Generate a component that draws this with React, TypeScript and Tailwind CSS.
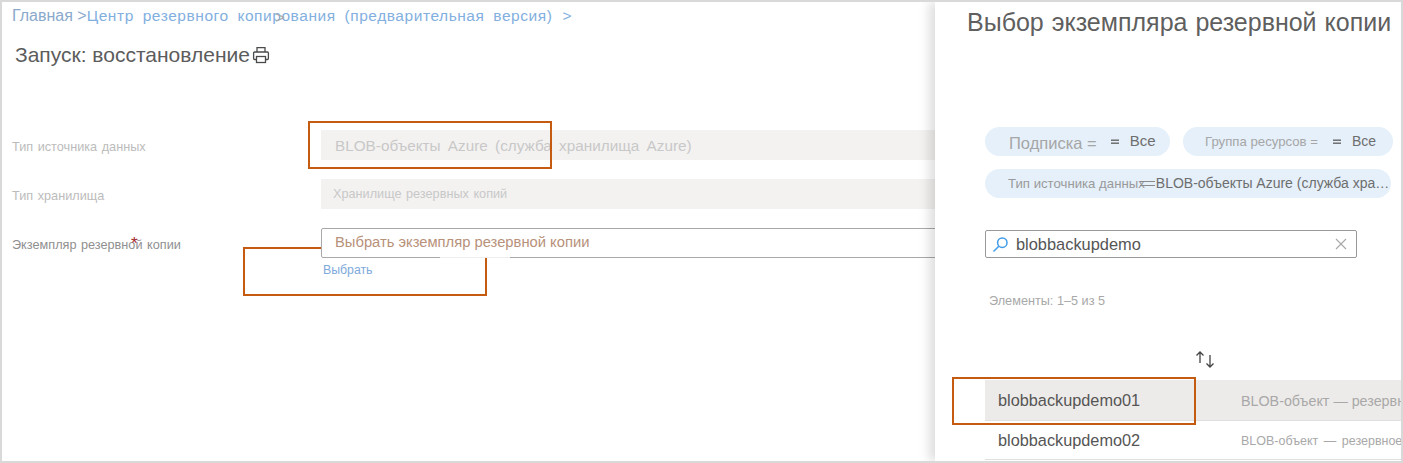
const font = { fontFamily: '"Liberation Sans", Arial, sans-serif' };

function PrintIcon() {
  return (
    <svg width="18" height="18" viewBox="0 0 18 18" fill="none" stroke="#4a4a4a" strokeWidth="1.3" className="ml-[2px] shrink-0">
      <path d="M5 6V1.6h8V6" />
      <path d="M4.5 13.5H2.6a1 1 0 0 1-1-1V7a1 1 0 0 1 1-1h12.8a1 1 0 0 1 1 1v5.5a1 1 0 0 1-1 1h-1.9" />
      <rect x="4.5" y="10.5" width="9" height="6" />
    </svg>
  );
}

function Eq() {
  return (
    <svg width="9" height="6" viewBox="0 0 9 6" className="shrink-0">
      <rect x="0" y="0.5" width="8" height="1.4" fill="#666" />
      <rect x="0" y="3.5" width="8" height="1.4" fill="#666" />
    </svg>
  );
}

function Row({ label, top, children, labelClass }: { label: string; top: string; children: React.ReactNode; labelClass: string }) {
  return (
    <div className={`flex items-center ${top}`}>
      <div className={`w-[309px] shrink-0 pt-[6px] text-[12.7px] [word-spacing:1px] ${labelClass}`}>{label}</div>
      {children}
    </div>
  );
}

export default function App() {
  return (
    <div style={font} className="relative flex h-[463px] w-[1403px] overflow-hidden border-2 border-[#d9d9d9] bg-white">
      <div className="relative h-full w-[933px] shrink-0 overflow-hidden pl-[10px]">
        <div className="mt-[4px] flex h-[20px] items-center whitespace-nowrap text-[15.5px] tracking-[0.55px] text-[#82afe0] [word-spacing:4px]">
          <span className="text-[16px] tracking-normal text-[#8aa9cc] [word-spacing:0]">Главная &gt;</span>
          <span>Центр резервного копирования (предварительная версия)</span>
          <span className="ml-[10px]">&gt;</span>
          <span className="absolute left-[273px] top-[3px] text-[17px] text-[#a8a8a8]">&gt;</span>
        </div>
        <div className="ml-[3px] mt-[16px] flex h-[26px] items-center whitespace-nowrap text-[21px] text-[#5c5c5c]">
          <span>Запуск: восстановление</span>
          <PrintIcon />
        </div>

        <Row label="Тип источника данных" top="mt-[62px]" labelClass="text-[#bcbcbc]">
          <div className="flex h-[30px] w-[700px] shrink-0 items-center whitespace-nowrap bg-[#f3f2f1] pl-[14px] pt-[2px] text-[15.3px] text-[#c8c8c8] [word-spacing:3px]">
            BLOB-объекты Azure (служба хранилища Azure)
          </div>
        </Row>
        <Row label="Тип хранилища" top="mt-[19px]" labelClass="text-[#bcbcbc]">
          <div className="flex h-[30px] w-[700px] shrink-0 items-center whitespace-nowrap bg-[#f3f2f1] pl-[12px] pt-[2px] text-[12.7px] text-[#c8c8c8] [word-spacing:1px]">
            Хранилище резервных копий
          </div>
        </Row>
        <Row label="Экземпляр резервной копии" top="relative mt-[19px]" labelClass="text-[#8f8f8f]">
          <span className="absolute left-[119px] top-[9px] text-[17px] leading-[14px] text-[#a4262c]">*</span>
          <div className="relative z-10 flex h-[30px] w-[700px] shrink-0 items-center whitespace-nowrap rounded-[2px] border border-[#a8a8a8] bg-white pb-[2px] pl-[13px] text-[14.75px] text-[#b8917a]">
            Выбрать экземпляр резервной копии
            <div className="absolute -bottom-px left-[118px] h-px w-[70px] bg-[#eeeeee]" />
          </div>
        </Row>
        <div className="ml-[311px] mt-[3px] text-[12.3px] text-[#7ea9dc]">Выбрать</div>

        <div className="absolute left-[306px] top-[119px] h-[48px] w-[244px] border-2 border-[#c55a11]" />
        <div className="absolute left-[241px] top-[245px] h-[49px] w-[244px] border-2 border-[#c55a11]" />
      </div>

      <div className="relative z-20 flex-1 overflow-hidden bg-white pl-[50px] shadow-[-6px_0_10px_rgba(0,0,0,0.13)]">
        <div className="-ml-[18px] mt-[6px] whitespace-nowrap text-[25px] leading-[28px] text-[#5f5f5f] [word-spacing:1px]">
          Выбор экземпляра резервной копии
        </div>

        <div className="mt-[91px] flex gap-[13px]">
          <div className="flex h-[29px] w-[185px] shrink-0 items-center rounded-full bg-[#e5f0fa] pl-[24px] text-[#a6a6a6]">
            <span className="mt-[3px] text-[16.5px]">Подписка =</span>
            <span className="ml-[14px]"><Eq /></span>
            <span className="ml-[10px] text-[15px] text-[#6e6e6e]">Все</span>
          </div>
          <div className="flex h-[29px] w-[210px] shrink-0 items-center rounded-full bg-[#e5f0fa] pl-[22px] text-[#a6a6a6]">
            <span className="text-[13.2px]">Группа ресурсов =</span>
            <span className="ml-[15px]"><Eq /></span>
            <span className="ml-[10px] text-[14px] text-[#6e6e6e]">Все</span>
          </div>
        </div>
        <div className="mt-[13px] flex h-[29px] w-[406px] items-center overflow-hidden whitespace-nowrap rounded-full bg-[#e5f0fa] pl-[23px]">
          <span className="shrink-0 text-[13.2px] text-[#9a9a9a]">Тип источника данных</span>
          <span className="-ml-[5px] mr-[1px] h-[5px] w-[15px] shrink-0 border-y border-[#8a8a8a]" />
          <span className="min-w-0 truncate text-[14px] text-[#6e6e6e]">BLOB-объекты Azure (служба храни…</span>
        </div>

        <div className="mt-[32px] flex h-[28px] w-[372px] items-center rounded-[2px] border border-[#999999] pl-[6px] pr-[9px]">
          <svg width="17" height="17" viewBox="0 0 17 17" fill="none" stroke="#3f9be8" strokeWidth="1.5" className="shrink-0">
            <circle cx="10.3" cy="6.7" r="4.7" />
            <path d="M6.8 10.2 1.5 15.5" />
          </svg>
          <span className="ml-[7px] flex-1 text-[16.4px] text-[#555555]">blobbackupdemo</span>
          <svg width="12" height="12" viewBox="0 0 12 12" stroke="#a8a8a8" strokeWidth="1.1" className="shrink-0">
            <path d="M1 1l10 10M11 1 1 11" />
          </svg>
        </div>

        <div className="ml-[4px] mt-[36px] h-[14px] text-[12.7px] leading-[14px] text-[#a8a8a8]">Элементы: 1–5 из 5</div>

        <div className="ml-[209px] mt-[42px] h-[20px]">
          <svg width="22" height="18" viewBox="0 0 22 18" fill="none" stroke="#444444" strokeWidth="1.3">
            <path d="M6 13V2M2.5 5.5 6 2l3.5 3.5" />
            <path d="M16 5v12M12.5 13.5 16 17l3.5-3.5" />
          </svg>
        </div>

        <div className="mt-[10px] flex h-[41px] items-center whitespace-nowrap border-b border-[#e0e0e0] bg-[#edebe9] pl-[13px]">
          <span className="w-[243px] shrink-0 text-[16.3px] text-[#555555]">blobbackupdemo01</span>
          <span className="mt-[4px] text-[14.3px] text-[#a8a8a8]">BLOB-объект — резервное</span>
        </div>
        <div className="flex h-[39px] items-center whitespace-nowrap border-b border-[#e0e0e0] pl-[13px]">
          <span className="w-[243px] shrink-0 text-[16.3px] text-[#555555]">blobbackupdemo02</span>
          <span className="mt-[2px] text-[12.5px] text-[#a8a8a8] [word-spacing:2px]">BLOB-объект — резервное</span>
        </div>
        <div className="absolute left-[17px] top-[375px] h-[48px] w-[244px] border-2 border-[#c55a11]" />
      </div>
    </div>
  );
}
